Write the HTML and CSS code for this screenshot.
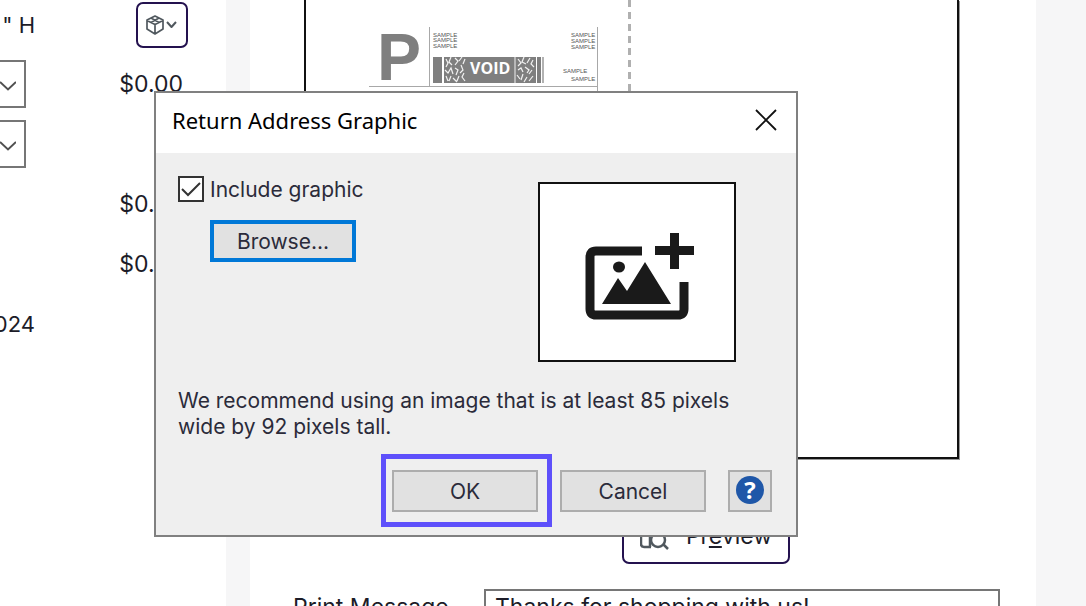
FILE: index.html
```html
<!DOCTYPE html>
<html lang="en">
<head>
    <meta charset="UTF-8">
    <meta name="viewport" content="width=device-width, initial-scale=1.0">
    <title>Return Address Graphic</title>
    <link rel="stylesheet" href="styles.css">
</head>
<body>
    <div class="workspace">
        <aside class="sidebar">
            <div class="row">
                <span class="value">" H</span>
                <button class="outline-btn package-btn" aria-label="Package size">
                    <svg width="34" height="22" viewBox="0 0 34 22" fill="none" stroke="#50585e" stroke-width="1.7" stroke-linejoin="round">
                        <path d="M10 2 L18 6 V15 L10 20 L2 15 V6 Z M2 6.5 L10 10.5 L18 6.5 M10 10.5 V20 M6 4 L14 8.5 M14 4 L6 8.5"/>
                        <path d="M22 8 L26.500 13 L31 8" stroke-width="2"/>
                    </svg>
                </button>
            </div>
            <div class="row">
                <div class="combo">
                    <select aria-label="Mail class"></select>
                    <svg class="chevron" width="16" height="10" viewBox="0 0 16 10"><path d="M0 1 L8 8.500 L16 1"/></svg>
                </div>
                <span class="price">$0.00</span>
            </div>
            <div class="row">
                <div class="combo">
                    <select aria-label="Tracking"></select>
                    <svg class="chevron" width="16" height="10" viewBox="0 0 16 10"><path d="M0 1 L8 8.500 L16 1"/></svg>
                </div>
            </div>
            <div class="row"><span></span><span class="price">$0.00</span></div>
            <div class="row"><span></span><span class="price">$0.00</span></div>
            <div class="row"><span class="value">024</span></div>
        </aside>

        <main class="main">
            <div class="envelope">
                <div class="stamp-side">
                    <svg class="stamp" width="230" height="66" viewBox="0 0 230 66">
                        <g stroke="#a8a8a8" fill="none">
                            <path d="M60.500 0 V60 M0 59.500 H228 M228.500 0 V66"/>
                        </g>
                        <text class="stamp-p" x="8" y="53">P</text>
                        <g class="sample">
                            <text x="64" y="10">SAMPLE</text>
                            <text x="64" y="15">SAMPLE</text>
                            <text x="64" y="21">SAMPLE</text>
                            <text x="202" y="10">SAMPLE</text>
                            <text x="202" y="16">SAMPLE</text>
                            <text x="202" y="22">SAMPLE</text>
                            <text x="194" y="46">SAMPLE</text>
                            <text x="202" y="54">SAMPLE</text>
                        </g>
                        <g fill="#7f7f7f">
                            <rect x="64" y="30" width="9" height="26"/>
                            <rect x="75" y="30" width="92" height="26"/>
                            <rect x="168" y="30" width="4" height="26"/>
                            <rect x="173" y="30" width="2" height="26" opacity=".6"/>
                        </g>
                        <g stroke="#f2f2f2" stroke-width="1.200" fill="none">
                            <path d="M77 32 l2 4 l-2 4 M82 30 l-2 5 l3 3 M86 31 l3 3 l-3 4 M93 30 l-3 4 M96 32 l-2 5 M76 43 l3 3 l3 -5 l2 6 M86 41 l3 2 l-2 5 M92 38 l2 5 l-3 3 M77 49 l2 5 M82 49 l-2 5 M84 51 l4 4 M90 49 l-2 5 M95 46 l-2 4 l3 4"/>
                            <path d="M146 30 V56" stroke-width="1"/>
                            <path d="M149 32 l3 4 l-3 3 M155 30 l-2 5 l4 2 M161 31 l-3 5 M164 33 l-2 4 l3 3 M149 43 l3 -2 l2 4 M156 40 l4 3 l-2 3 M163 43 l-3 4 M148 48 l3 4 M154 47 l-2 6 M158 50 l-3 5 M164 49 l-4 5"/>
                        </g>
                        <text class="void" x="101" y="47">VOID</text>
                    </svg>
                </div>
                <div class="perforation"></div>
            </div>

            <div class="preview-row">
                <button class="outline-btn preview-btn">
                    <svg width="32" height="32" viewBox="0 0 32 32" fill="none" stroke="#50585e" stroke-width="2.500">
                        <path d="M11 27 H4 Q1 27 1 24 V7 Q1 4 4 4 H20 Q23 4 23 7 V11 M10 4 V27"/>
                        <circle cx="18" cy="20" r="7"/>
                        <path d="M23 24 L28 29"/>
                    </svg>
                    <span>Pr<u>e</u>view</span>
                </button>
            </div>

            <div class="message-row">
                <label for="printMessage">Print Message</label>
                <input type="text" id="printMessage" value="Thanks for shopping with us!">
            </div>
        </main>
    </div>

    <div class="dialog" role="dialog" aria-labelledby="dialogTitle">
        <div class="title-bar">
            <h1 id="dialogTitle">Return Address Graphic</h1>
            <button class="close-btn" aria-label="Close">
                <svg width="22" height="22" viewBox="0 0 22 22"><path d="M1 1 L21 21 M21 1 L1 21" stroke="#111" stroke-width="1.800"/></svg>
            </button>
        </div>
        <div class="dialog-body">
            <div class="options">
                <div class="controls">
                    <div class="check">
                        <input type="checkbox" id="includeGraphic" checked>
                        <svg class="tick" width="26" height="26" viewBox="0 0 26 26"><path d="M4 13 L10 19 L22 7"/></svg>
                        <label for="includeGraphic">Include graphic</label>
                    </div>
                    <button class="btn browse">Browse...</button>
                </div>
                <div class="graphic">
                    <svg width="112" height="90" viewBox="0 0 112 90" fill="#1a1a1a">
                        <path d="M58 18 H12 Q6 18 6 24 V76 Q6 82 12 82 H94 Q100 82 100 76 V49" fill="none" stroke="#1a1a1a" stroke-width="9"/>
                        <rect x="71" y="13" width="39" height="9"/>
                        <rect x="86" y="0" width="9" height="36"/>
                        <ellipse cx="35" cy="34" rx="6" ry="5.500"/>
                        <path d="M18 71 L34 45 L43 58 L61 29 L87 71 Z"/>
                    </svg>
                </div>
            </div>
            <p class="hint">We recommend using an image that is at least 85 pixels wide by 92 pixels tall.</p>
            <div class="actions">
                <button class="btn ok">OK</button>
                <button class="btn">Cancel</button>
                <button class="btn help" aria-label="Help"><span>?</span></button>
            </div>
        </div>
    </div>
</body>
</html>
```
FILE: styles.css
```css
* {
    box-sizing: border-box;
}
body {
    margin: 0;
    height: 100vh;
    overflow: hidden;
    position: relative;
    background: #f6f6f7;
    font-family: Inter, "Liberation Sans", sans-serif;
    font-size: 23px;
    color: #1c1c28;
}
button, input, select {
    font: inherit;
    color: inherit;
    border-radius: 0;
}
.workspace {
    display: flex;
    gap: 24px;
    height: 100%;
    padding-right: 50px;
}
.sidebar {
    flex: 0 0 226px;
    background: white;
    overflow: hidden;
}
.row {
    display: flex;
    justify-content: space-between;
    align-items: center;
    height: 60px;
    padding-right: 38px;
}
.row:first-child {
    height: 54px;
    padding-bottom: 4px;
}
.value {
    display: flex;
    justify-content: flex-end;
    width: 35px;
    font-size: 22px;
    white-space: pre;
}
.price {
    padding-right: 5px;
}
.combo {
    position: relative;
    display: flex;
    justify-content: flex-end;
    width: 26px;
}
.combo select {
    flex: none;
    width: 160px;
    height: 48px;
    appearance: none;
    background: white;
    border: 2px solid #767676;
}
.chevron {
    position: absolute;
    top: 21px;
    right: 10px;
    fill: none;
    stroke: #505050;
    stroke-width: 2;
    pointer-events: none;
}
.outline-btn {
    display: flex;
    align-items: center;
    justify-content: center;
    background: white;
    border: 2px solid #24124f;
    border-radius: 7px;
}
.package-btn {
    width: 52px;
    height: 46px;
    padding: 0;
}
.main {
    flex: 1;
    background: white;
    overflow: hidden;
}
.envelope {
    display: flex;
    height: 459px;
    margin: 0 77px 0 54px;
    border: 2px solid #111;
    border-top: none;
    box-shadow: 1px 1px 0 #999;
}
.stamp-side {
    width: 322px;
    padding: 27px 0 0 63px;
}
.perforation {
    width: 3px;
    background: repeating-linear-gradient(#b0b0b0 0 7px, transparent 7px 12px);
}
.stamp-p {
    font: bold 66px "Liberation Sans", sans-serif;
    fill: #7f7f7f;
}
.sample {
    font: 6px "Liberation Sans", sans-serif;
    fill: #555;
}
.void {
    font: bold 16px "Open Sans", sans-serif;
    fill: white;
}
.preview-row {
    display: flex;
    justify-content: center;
    padding: 51px 0 25px 126px;
}
.preview-btn {
    gap: 14px;
    width: 168px;
    height: 54px;
    padding: 0 0 2px;
}
.message-row {
    display: flex;
    align-items: center;
    padding: 0 36px 0 43px;
}
.message-row label {
    flex: 0 0 191px;
}
.message-row input {
    flex: 1;
    height: 36px;
    padding: 0 9px;
    border: 2px solid #767676;
}

/* dialog */
.dialog {
    position: absolute;
    top: 91px;
    left: 154px;
    width: 644px;
    background: #efefef;
    border: 2px solid #808080;
    font-size: 21px;
    line-height: 26px;
    color: #2b2b3a;
}
.title-bar {
    display: flex;
    justify-content: space-between;
    align-items: center;
    height: 60px;
    padding: 0 19px 6px 16px;
    background: white;
}
.title-bar h1 {
    margin: 0;
    font: 22px "Noto Sans", sans-serif;
    color: black;
}
.close-btn {
    display: flex;
    padding: 0;
    border: none;
    background: none;
}
.dialog-body {
    padding: 23px 22px;
}
.options {
    display: flex;
    justify-content: space-between;
    padding-right: 38px;
}
.graphic {
    display: flex;
    align-items: center;
    justify-content: center;
    width: 198px;
    height: 180px;
    margin-top: 6px;
    padding-top: 12px;
    padding-left: 6px;
    background: white;
    border: 2px solid #111;
}
.check {
    position: relative;
    display: flex;
    align-items: center;
    gap: 6px;
    height: 26px;
}
.check input {
    appearance: none;
    width: 26px;
    height: 26px;
    margin: 0;
    background: white;
    border: 2px solid #333;
}
.tick {
    position: absolute;
    left: 0;
    top: 0;
    fill: none;
    stroke: #333;
    stroke-width: 2;
    pointer-events: none;
}
.check input:not(:checked) + .tick {
    display: none;
}
.check label {
    padding-top: 2px;
}
.btn {
    position: relative;
    width: 146px;
    height: 42px;
    padding: 2px 0 0;
    background: #e1e1e1;
    border: 2px solid #adadad;
}
.browse {
    margin: 18px 0 0 32px;
    border: 4px solid #0078d7;
}
.hint {
    margin: 26px 0 30px;
    max-width: 570px;
}
.actions {
    display: flex;
    justify-content: flex-end;
    gap: 22px;
    padding-right: 2px;
}
/* ring around the default action */
.ok::after {
    content: "";
    position: absolute;
    inset: -18px -16px -17px -13px;
    border: 5px solid #5e50fb;
}
.help {
    display: flex;
    align-items: center;
    justify-content: center;
    width: 44px;
    padding: 0 0 2px;
}
.help span {
    width: 28px;
    height: 28px;
    border-radius: 50%;
    background: #1f57a8;
    color: white;
    font: bold 24px/28px "Open Sans", sans-serif;
}
```
